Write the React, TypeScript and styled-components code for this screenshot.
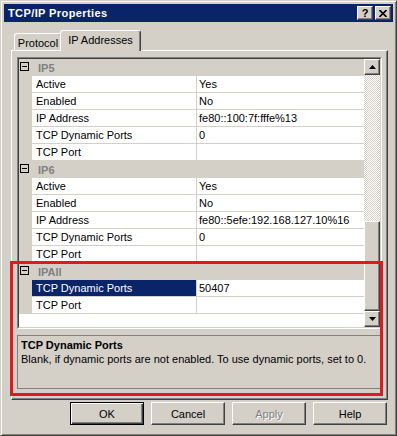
import React from 'react'
import styled, { createGlobalStyle, css } from 'styled-components'

const GlobalStyle = createGlobalStyle`
  html, body {
    margin: 0;
    padding: 0;
    background: #d4d0c8;
  }
  body {
    font-family: 'Liberation Sans', Arial, sans-serif;
    font-size: 11px;
    color: #000;
  }
`

const raised = css`
  border: 1px solid;
  border-color: #fff #404040 #404040 #fff;
  box-shadow: inset -1px -1px #808080;
  background: #d4d0c8;
`

const Window = styled.div`
  position: relative;
  width: 397px;
  height: 436px;
  box-sizing: border-box;
  background: #d4d0c8;
  border: 1px solid;
  border-color: #d4d0c8 #404040 #404040 #d4d0c8;
  box-shadow: inset 1px 1px #fff, inset -1px -1px #808080;
  padding: 3px;
  display: flex;
  flex-direction: column;
`

const TitleBar = styled.div`
  height: 18px;
  background: #0a246a;
  display: flex;
  align-items: center;
  padding: 0 2px 0 4px;
  gap: 2px;
`

const TitleText = styled.div`
  flex: 1;
  color: #fff;
  font-weight: bold;
  font-size: 11px;
  letter-spacing: 0.4px;
`

const TitleButton = styled.div`
  ${raised};
  width: 16px;
  height: 14px;
  box-sizing: border-box;
  display: flex;
  align-items: center;
  justify-content: center;
  font-weight: bold;
  font-size: 11px;
  line-height: 1;
`

const Body = styled.div`
  flex: 1;
  display: flex;
  flex-direction: column;
  padding: 8px 5px 0 7px;
`

const TabStrip = styled.div`
  display: flex;
  align-items: flex-end;
  padding-left: 3px;
  height: 20px;
`

const Tab = styled.div<{ $active?: boolean; $width: number }>`
  box-sizing: border-box;
  width: ${p => p.$width}px;
  border: 1px solid;
  border-bottom: none;
  border-color: #fff #404040 transparent #fff;
  border-radius: 3px 3px 0 0;
  box-shadow: inset -1px 0 #808080;
  background: #d4d0c8;
  display: flex;
  align-items: center;
  justify-content: center;
  position: relative;
  white-space: nowrap;
  ${p => p.$active ? css`
    height: 21px;
    margin: 0 -2px -1px -2px;
    padding-bottom: 2px;
    z-index: 1;
  ` : css`
    height: 17px;
    padding-top: 1px;
  `}
`

const Panel = styled.div`
  box-sizing: border-box;
  height: 350px;
  border: 1px solid;
  border-color: #fff #404040 #404040 #fff;
  box-shadow: inset -1px -1px #808080;
  padding: 6px 5px 10px 5px;
  display: flex;
  flex-direction: column;
  gap: 6px;
`

const GridFrame = styled.div`
  height: 272px;
  box-sizing: border-box;
  border: 1px solid;
  border-color: #808080 #fff #fff #808080;
  display: flex;
`

const GridInner = styled.div`
  flex: 1;
  border: 1px solid;
  border-color: #404040 #d4d0c8 #d4d0c8 #404040;
  display: flex;
  background: #fff;
`

const Rows = styled.div`
  flex: 1;
  display: flex;
  flex-direction: column;
`

const Row = styled.div`
  display: grid;
  grid-template-columns: 13px 165px 1fr;
  height: 17px;
`

const Margin = styled.div`
  background: #d4d0c8;
`

const NameCell = styled.div<{ $selected?: boolean }>`
  box-sizing: border-box;
  border-bottom: 1px solid #d4d0c8;
  border-right: 1px solid #d4d0c8;
  padding-left: 4px;
  line-height: 16px;
  white-space: nowrap;
  background: ${p => p.$selected ? '#0a246a' : '#fff'};
  color: ${p => p.$selected ? '#fff' : '#000'};
`

const ValueCell = styled.div`
  box-sizing: border-box;
  border-bottom: 1px solid #d4d0c8;
  padding-left: 2px;
  line-height: 16px;
  white-space: nowrap;
`

const CategoryRow = styled.div`
  height: 17px;
  background: #d4d0c8;
  display: flex;
  align-items: center;
`

const Toggle = styled.div`
  width: 9px;
  height: 9px;
  box-sizing: border-box;
  border: 1px solid #000;
  margin: -2px 7px 0 1px;
  display: flex;
  align-items: center;
  justify-content: center;
  &::after {
    content: '';
    width: 5px;
    height: 1px;
    background: #000;
  }
`

const CategoryText = styled.div`
  font-weight: bold;
  color: #808080;
  line-height: 16px;
  padding-left: 2px;
`

const Filler = styled.div`
  flex: 1;
  background: #fff;
`

const ScrollBar = styled.div`
  width: 16px;
  display: flex;
  flex-direction: column;
`

const ScrollButton = styled.div`
  ${raised};
  width: 16px;
  height: 16px;
  box-sizing: border-box;
  display: flex;
  align-items: center;
  justify-content: center;
`

const Track = styled.div`
  flex: 1;
  display: flex;
  flex-direction: column;
  justify-content: flex-end;
  background: repeating-conic-gradient(#d4d0c8 0% 25%, #fff 0% 50%) 0 0 / 2px 2px;
`

const Thumb = styled.div`
  ${raised};
  box-sizing: border-box;
  height: 90px;
`

const HelpPane = styled.div`
  flex: 1;
  border: 1px solid #808080;
  padding: 2px 3px;
  line-height: 14px;
`

const HelpTitle = styled.div`
  font-weight: bold;
`

const ButtonRow = styled.div`
  display: flex;
  justify-content: flex-end;
  gap: 7px;
  margin: 2px 1px 0 0;
`

const Button = styled.div<{ $default?: boolean; $disabled?: boolean }>`
  ${raised};
  width: 74px;
  height: 23px;
  box-sizing: border-box;
  display: flex;
  align-items: center;
  justify-content: center;
  color: ${p => p.$disabled ? '#808080' : '#000'};
  text-shadow: ${p => p.$disabled ? '1px 1px #fff' : 'none'};
  ${p => p.$default && css`
    border-color: #000;
    box-shadow: inset 1px 1px #fff, inset -1px -1px #404040, inset -2px -2px #808080;
  `}
`

const Annotation = styled.div`
  position: absolute;
  left: 9px;
  top: 260px;
  width: 373px;
  height: 135px;
  box-sizing: border-box;
  border: 3px solid #dc1a1f;
  pointer-events: none;
`

const Arrow = ({ up }: { up?: boolean }) => (
  <svg width="7" height="4" viewBox="0 0 7 4">
    <path d={up ? 'M3.5 0 L7 4 L0 4 Z' : 'M0 0 L7 0 L3.5 4 Z'} fill="#000" />
  </svg>
)

type Prop = { name: string; value: string; selected?: boolean }
type Category = { title: string; props: Prop[] }

const categories: Category[] = [
  {
    title: 'IP5',
    props: [
      { name: 'Active', value: 'Yes' },
      { name: 'Enabled', value: 'No' },
      { name: 'IP Address', value: 'fe80::100:7f:fffe%13' },
      { name: 'TCP Dynamic Ports', value: '0' },
      { name: 'TCP Port', value: '' },
    ],
  },
  {
    title: 'IP6',
    props: [
      { name: 'Active', value: 'Yes' },
      { name: 'Enabled', value: 'No' },
      { name: 'IP Address', value: 'fe80::5efe:192.168.127.10%16' },
      { name: 'TCP Dynamic Ports', value: '0' },
      { name: 'TCP Port', value: '' },
    ],
  },
  {
    title: 'IPAll',
    props: [
      { name: 'TCP Dynamic Ports', value: '50407', selected: true },
      { name: 'TCP Port', value: '' },
    ],
  },
]

export default function App() {
  return (
    <>
      <GlobalStyle />
      <Window>
        <TitleBar>
          <TitleText>TCP/IP Properties</TitleText>
          <TitleButton>?</TitleButton>
          <TitleButton>
            <svg width="8" height="7" viewBox="0 0 8 7">
              <path d="M0.5 0 L7.5 7 M7.5 0 L0.5 7" stroke="#000" strokeWidth="1.6" />
            </svg>
          </TitleButton>
        </TitleBar>
        <Body>
          <TabStrip>
            <Tab $width={48}>Protocol</Tab>
            <Tab $active $width={81}>IP Addresses</Tab>
          </TabStrip>
          <Panel>
            <GridFrame>
              <GridInner>
                <Rows>
                  {categories.map(cat => (
                    <React.Fragment key={cat.title}>
                      <CategoryRow>
                        <Toggle />
                        <CategoryText>{cat.title}</CategoryText>
                      </CategoryRow>
                      {cat.props.map(p => (
                        <Row key={cat.title + p.name}>
                          <Margin />
                          <NameCell $selected={p.selected}>{p.name}</NameCell>
                          <ValueCell>{p.value}</ValueCell>
                        </Row>
                      ))}
                    </React.Fragment>
                  ))}
                  <Filler />
                </Rows>
                <ScrollBar>
                  <ScrollButton><Arrow up /></ScrollButton>
                  <Track>
                    <Thumb />
                  </Track>
                  <ScrollButton><Arrow /></ScrollButton>
                </ScrollBar>
              </GridInner>
            </GridFrame>
            <HelpPane>
              <HelpTitle>TCP Dynamic Ports</HelpTitle>
              <div>Blank, if dynamic ports are not enabled. To use dynamic ports, set to 0.</div>
            </HelpPane>
          </Panel>
          <ButtonRow>
            <Button $default>OK</Button>
            <Button>Cancel</Button>
            <Button $disabled>Apply</Button>
            <Button>Help</Button>
          </ButtonRow>
        </Body>
        <Annotation />
      </Window>
    </>
  )
}
